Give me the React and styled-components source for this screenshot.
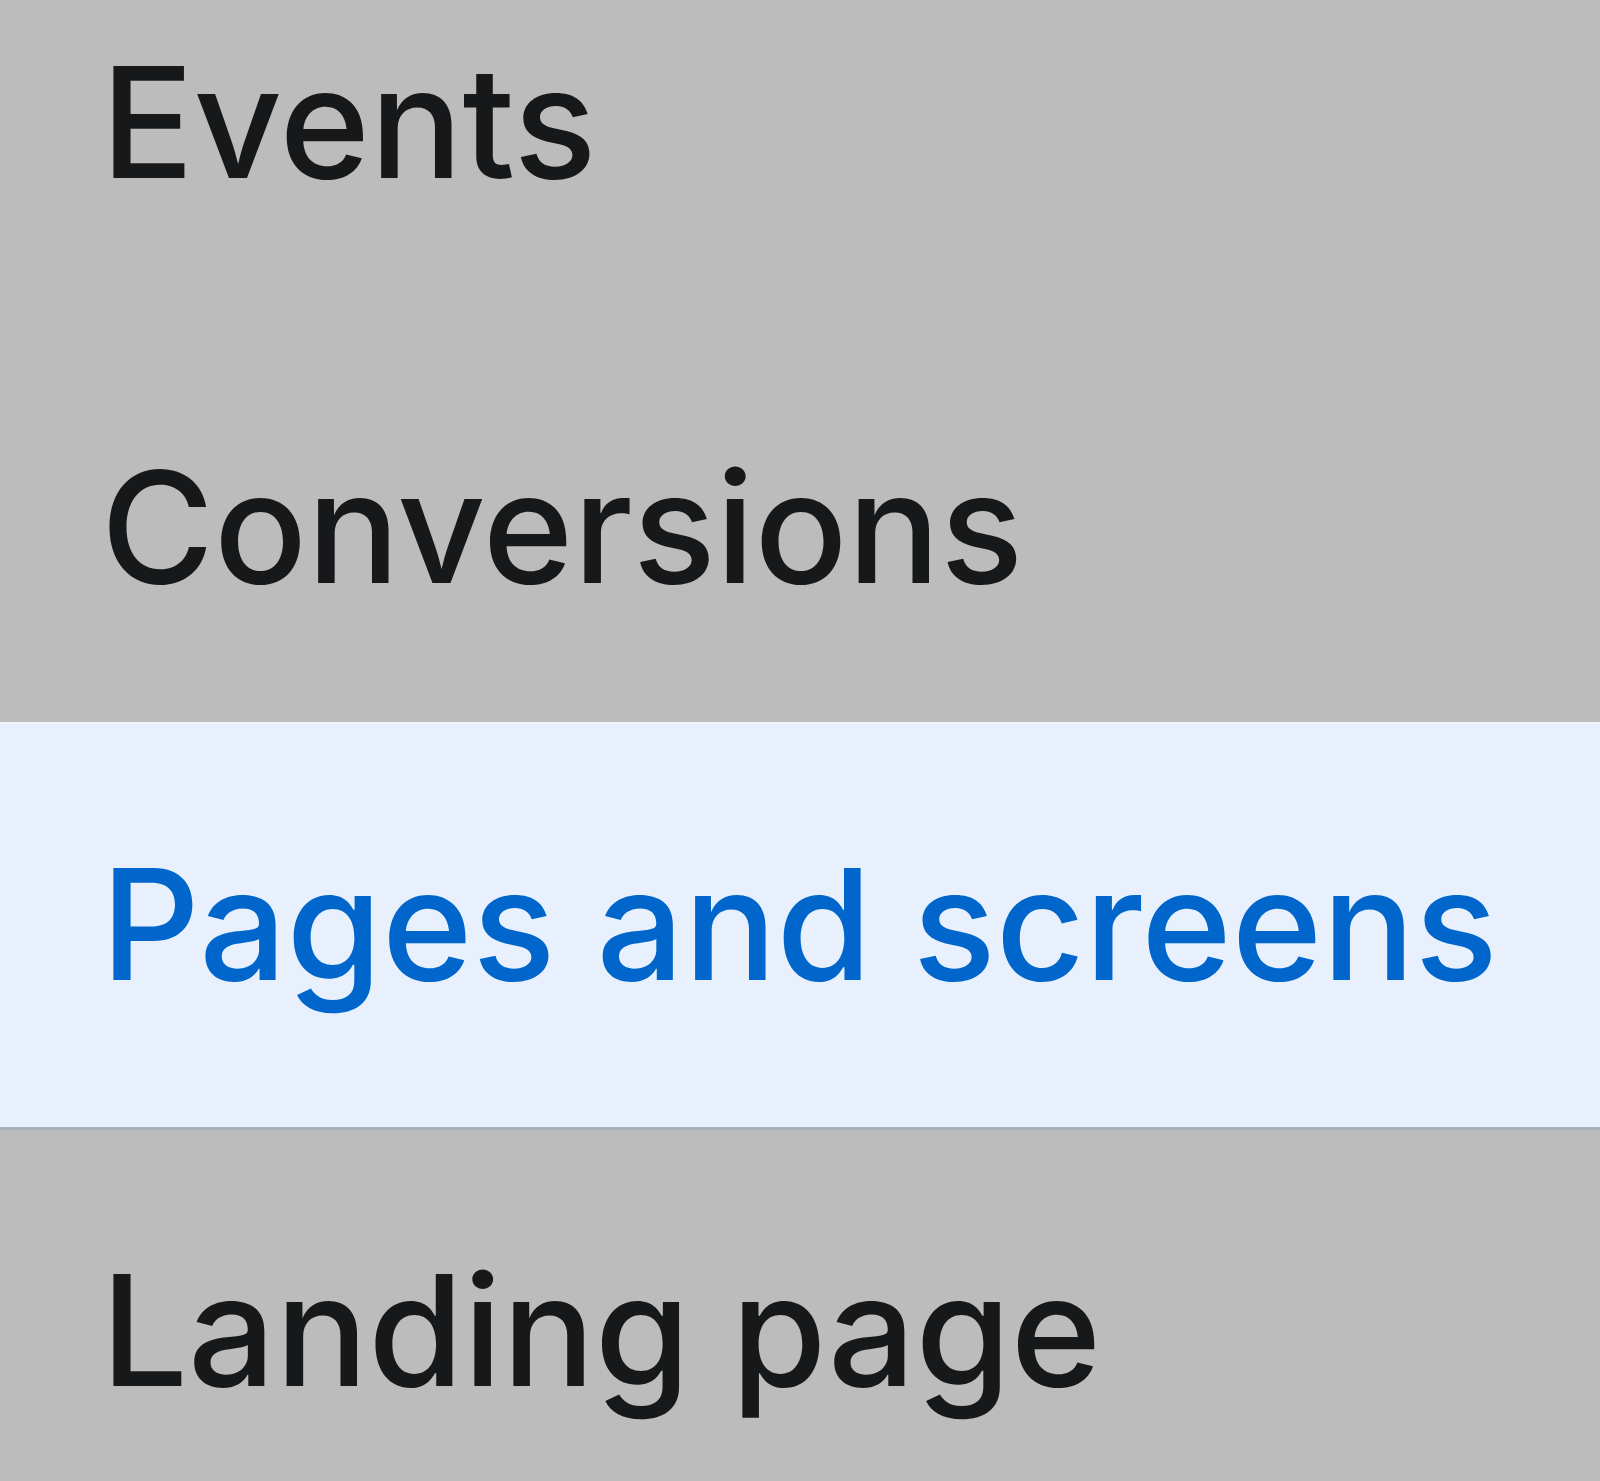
import React from "react";
import styled, { createGlobalStyle } from "styled-components";

const GlobalStyle = createGlobalStyle`
  html, body {
    margin: 0;
    padding: 0;
    background: #bbbcbb;
  }
  body {
    height: 100vh;
    overflow: hidden;
  }
`;

const Menu = styled.ul`
  list-style: none;
  margin: -81px 0 0 0; /* the list is cropped at the top */
  padding: 0;
  display: flex;
  flex-direction: column;
  width: 1600px;
`;

const Item = styled.li`
  display: flex;
  align-items: center;
  box-sizing: border-box;
  height: 405px;
  flex-shrink: 0;
  padding: 0 0 0 101px;
  font-family: "Inter", "Noto Sans", sans-serif;
  font-weight: 500;
  font-size: 154px;
  line-height: 1;
  color: #17181a;
  white-space: nowrap;

  &[data-active="true"] {
    margin-top: -7px;
    padding-bottom: 4px;
    color: #0066cc;
    background: #e7f0fc;
    border-top: 2px solid #f1f5fb;
    box-shadow: 0 3px 0 0 #a9b0b7;
  }
`;

const items = ["Events", "Conversions", "Pages and screens", "Landing page"];

export default function App() {
  const active = "Pages and screens";
  return (
    <>
      <GlobalStyle />
      <Menu>
        {items.map((label) => (
          <Item key={label} data-active={label === active}>
            {label}
          </Item>
        ))}
      </Menu>
    </>
  );
}
